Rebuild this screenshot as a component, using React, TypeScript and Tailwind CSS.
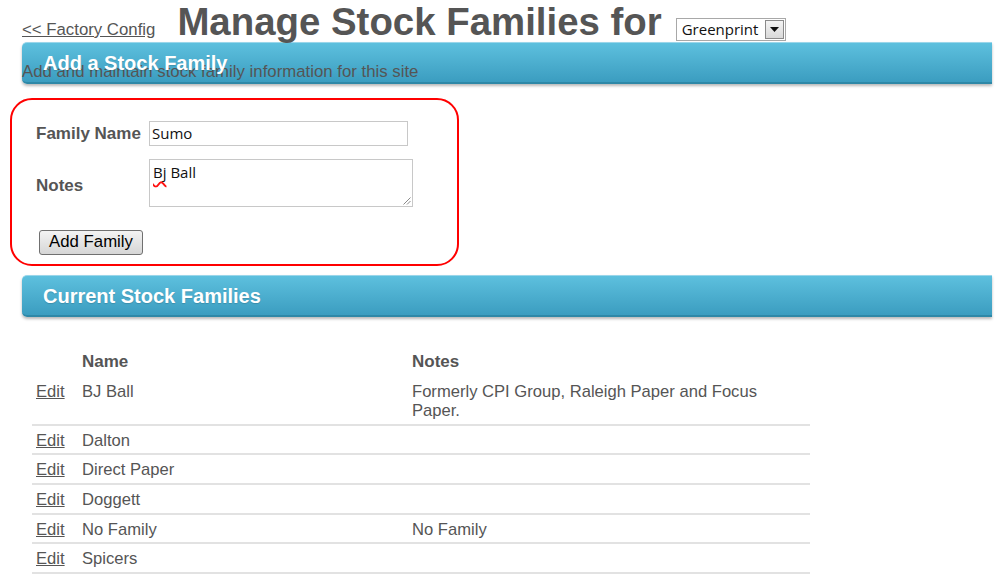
import React from "react";

type Family = {
  name: string;
  notes: string;
};

const families: Family[] = [
  { name: "BJ Ball", notes: "Formerly CPI Group, Raleigh Paper and Focus Paper." },
  { name: "Dalton", notes: "" },
  { name: "Direct Paper", notes: "" },
  { name: "Doggett", notes: "" },
  { name: "No Family", notes: "No Family" },
  { name: "Spicers", notes: "" },
];

function SectionBar({ title }: { title: string }) {
  return (
    <div className="ml-[22px] flex h-[42px] w-[970px] items-center rounded-l-[5px] border-t border-b-2 border-t-[#9ad6ea] border-b-[#2e88a7] bg-linear-to-b from-[#5dc0de] to-[#3b9dc0] pl-[21px] shadow-[0_2px_3px_rgba(0,0,0,0.28)]">
      <span className="relative text-[20px] font-bold text-white [text-shadow:0_1px_1px_rgba(0,0,0,0.15)]">
        {title}
      </span>
    </div>
  );
}

export default function App() {
  return (
    <div className="h-[580px] w-[995px] overflow-hidden bg-white font-['Liberation_Sans',Arial,sans-serif] text-[#555]">
      {/* page heading */}
      <div className="flex h-[42px] items-baseline pl-[22px]">
        <a href="#" className="text-[16.8px] text-[#555] underline">
          &lt;&lt; Factory Config
        </a>
        <h1 className="ml-[22px] text-[38.4px] leading-[44px] font-bold text-[#555]">
          Manage Stock Families for
        </h1>
        <div className="ml-[14px] inline-flex h-[23px] w-[110px] items-center border border-[#a8a8a8] bg-white pl-[5px] font-['Open_Sans','Noto_Sans',sans-serif] text-[15px] leading-[21px] text-[#111]">
          <span className="flex-1">Greenprint</span>
          <span className="mr-px flex h-[19px] w-[19px] items-center justify-center border border-[#8a8a8a] bg-linear-to-b from-[#f4f4f4] to-[#d9d9d9]">
            <svg width="9" height="5" viewBox="0 0 9 5">
              <path d="M0 0h9L4.5 5z" fill="#111" />
            </svg>
          </span>
        </div>
      </div>

      <SectionBar title="Add a Stock Family" />
      <p className="-mt-[22px] pl-[22px] text-[16.8px] leading-[20px]">
        Add and maintain stock family information for this site
      </p>

      {/* add form */}
      <div className="mt-[16px] ml-[10px] h-[168px] w-[449px] rounded-[22px] border-2 border-[#ff0000] pt-[21px] pl-[24px]">
        <div className="flex items-center">
          <label className="w-[113px] text-[17px] font-bold">Family Name</label>
          <div className="h-[25px] w-[259px] border border-[#c8c8c8] pl-[2px] font-['Open_Sans','Noto_Sans',sans-serif] text-[15px] leading-[23px] text-[#111]">
            Sumo
          </div>
        </div>
        <div className="mt-[12px] flex items-center">
          <label className="w-[113px] pt-[6px] text-[17px] font-bold">Notes</label>
          <div className="relative h-[48px] w-[264px] border border-[#c8c8c8] pt-[2px] pl-[3px] font-['Open_Sans','Noto_Sans',sans-serif] text-[15px] leading-[20px] text-[#111]">
            <span className="underline decoration-[#ff1010] decoration-wavy decoration-[1.5px] underline-offset-[3px] [text-decoration-skip-ink:none]">
              Bj
            </span>{" "}
            Ball
            <svg className="absolute right-px bottom-px" width="9" height="9" viewBox="0 0 9 9">
              <path d="M8.5 1.5L1.5 8.5M8.5 5L5 8.5" stroke="#8a8a8a" strokeWidth="1" />
            </svg>
          </div>
        </div>
        <button
          type="button"
          className="mt-[23px] ml-[3px] h-[25px] w-[104px] rounded-[3px] border border-[#707070] bg-linear-to-b from-[#f3f3f3] to-[#d6d6d6] text-[16.8px] leading-[22px] text-black"
        >
          Add Family
        </button>
      </div>

      <div className="mt-[9px]">
        <SectionBar title="Current Stock Families" />
      </div>

      {/* families table */}
      <table className="mt-[30px] ml-[32px] w-[778px] table-fixed border-collapse text-[16.6px] leading-[19.6px]">
        <colgroup>
          <col className="w-[46px]" />
          <col className="w-[330px]" />
          <col className="w-[402px]" />
        </colgroup>
        <thead>
          <tr className="text-left text-[17px] font-bold">
            <th className="px-[4px] pt-[5px] pb-[5px]"></th>
            <th className="px-[4px] pt-[5px] pb-[5px]">Name</th>
            <th className="px-[4px] pt-[5px] pb-[5px]">Notes</th>
          </tr>
        </thead>
        <tbody>
          {families.map((f) => (
            <tr key={f.name} className="border-b-2 border-[#e2e2e2] align-top">
              <td className="px-[4px] pt-[5px] pb-[3px]">
                <a href="#" className="text-[#555] underline">
                  Edit
                </a>
              </td>
              <td className="px-[4px] pt-[5px] pb-[3px]">{f.name}</td>
              <td className="px-[4px] pt-[5px] pb-[3px]">{f.notes}</td>
            </tr>
          ))}
        </tbody>
      </table>
    </div>
  );
}
